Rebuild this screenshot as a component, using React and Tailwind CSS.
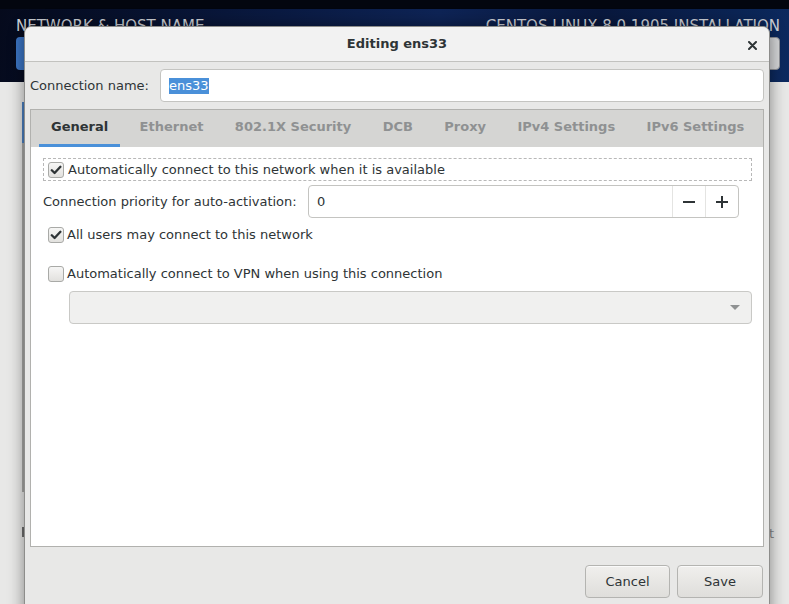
import React from 'react';

const tabs = ['General', 'Ethernet', '802.1X Security', 'DCB', 'Proxy', 'IPv4 Settings', 'IPv6 Settings'];

const Checkbox = ({ checked }) => (
  <span className="flex h-[16px] w-[16px] shrink-0 items-center justify-center rounded-[3px] border border-[#a9aaa7] bg-[linear-gradient(#f6f6f5,#e2e1de)]">
    {checked && (
      <svg width="12" height="12" viewBox="0 0 12 12">
        <path d="M1.8 6.2 L4.6 9 L10.4 2.8" fill="none" stroke="#2e3436" strokeWidth="2.3" strokeLinecap="round" strokeLinejoin="round" />
      </svg>
    )}
  </span>
);

const Button = ({ children, className }) => (
  <button className={`flex h-[33px] items-center justify-center rounded-[4px] border border-[#b4b4b1] bg-[linear-gradient(#f0efed,#dfdedb)] text-[13px] text-[#2e3436] shadow-[inset_0_1px_0_#fafafa] ${className}`}>
    {children}
  </button>
);

const App = () => {
  return (
    <div className="relative h-[604px] w-[789px] overflow-hidden bg-[#e8e8e7] font-['DejaVu_Sans',sans-serif] text-[#2e3436]">
      {/* installer hub in the background */}
      <div className="relative h-[82px] bg-[linear-gradient(100deg,#050a1c_0%,#0a1a42_35%,#0e2456_55%,#09183d_75%,#0c2a60_100%)]">
        <div className="h-[9px] bg-[#03060f]" />
        <div className="flex items-start justify-between pl-[16px] pr-[9px] pt-[8px] text-[15px] leading-[18px] text-[#cfd2d8]">
          <span>NETWORK &amp; HOST NAME</span>
          <span>CENTOS LINUX 8.0.1905 INSTALLATION</span>
        </div>
        <div className="absolute left-[16px] top-[37px] h-[33px] w-[70px] rounded-[4px] bg-[#3b74c3]" />
        <div className="absolute left-[720px] top-[37px] h-[33px] w-[60px] rounded-[4px] border border-[#8e9096] bg-[#d5d6d8]" />
      </div>
      <div className="absolute left-[22px] top-[102px] h-[390px] w-[2px] bg-[#a9a9a7]" />
      <div className="absolute left-[22px] top-[102px] h-[41px] w-[2px] bg-[#4a7fc0]" />
      <div className="absolute left-[22px] top-[527px] h-[10px] w-[2px] bg-[#6d6d6d]" />
      <span className="absolute left-[769px] top-[524px] text-[13px] text-[#8a8a8a]">t</span>

      {/* dialog */}
      <div className="absolute left-[24px] top-[26px] flex h-[600px] w-[746px] flex-col rounded-t-[7px] border border-[#8d8d8b] bg-[#e8e8e7] shadow-[0_0_16px_rgba(0,0,0,0.45)]">
        <div className="relative flex h-[35px] shrink-0 items-center justify-center rounded-t-[7px] border-b border-[#c2c2bf] bg-[#f2f2f2]">
          <span className="text-[13px] font-bold">Editing ens33</span>
          <svg className="absolute left-[723px] top-[14px]" width="9" height="9" viewBox="0 0 9 9">
            <path d="M1 1 L8 8 M8 1 L1 8" stroke="#2e3436" strokeWidth="2" strokeLinecap="round" />
          </svg>
        </div>

        <div className="flex flex-col px-[5px]">
          <div className="mt-[7px] flex h-[33px] items-center">
            <span className="text-[13px]">Connection name:</span>
            <div className="ml-auto flex h-[33px] w-[604px] items-center rounded-[4px] border border-[#c4c4c1] bg-white pl-[8px]">
              <span className="bg-[#4a90d9] text-[13px] leading-[16px] text-white">ens33</span>
            </div>
          </div>

          <div className="mt-[7px] flex h-[438px] flex-col border border-[#b1b1ae]">
            <div className="flex h-[37px] shrink-0 gap-[7.4px] bg-[#d5d5d3] pl-2">
              {tabs.map((tab, i) => (
                <div
                  key={tab}
                  className={`relative flex items-center px-3 pb-[4px] text-[13px] font-bold ${i === 0 ? 'text-[#2e3436]' : 'text-[#8f9192]'}`}
                >
                  {tab}
                  {i === 0 && <span className="absolute bottom-0 left-0 h-[3px] w-full bg-[#4a90d9]" />}
                </div>
              ))}
            </div>

            <div className="flex flex-1 flex-col bg-white pl-[12px] text-[13px]">
              <div className="mt-[11px] flex h-[23px] w-[709px] items-center gap-[4px] border border-dashed border-[#b8b8b8] pl-[4px]">
                <Checkbox checked />
                <span>Automatically connect to this network when it is available</span>
              </div>

              <div className="mt-[4px] flex h-[33px] items-center">
                <span className="w-[265px]">Connection priority for auto-activation:</span>
                <div className="flex h-[33px] w-[431px] rounded-[4px] border border-[#c4c4c1]">
                  <span className="flex flex-1 items-center pl-[8px]">0</span>
                  <span className="flex w-[33px] items-center justify-center border-l border-[#e4e4e2]">
                    <svg width="12" height="12" viewBox="0 0 12 12">
                      <path d="M0 6 H12" stroke="#2e3436" strokeWidth="2" />
                    </svg>
                  </span>
                  <span className="flex w-[33px] items-center justify-center border-l border-[#e4e4e2]">
                    <svg width="12" height="12" viewBox="0 0 12 12">
                      <path d="M0 6 H12 M6 0 V12" stroke="#2e3436" strokeWidth="2" />
                    </svg>
                  </span>
                </div>
              </div>

              <div className="ml-[5px] mt-[5px] flex h-[24px] items-center gap-[3px]">
                <Checkbox checked />
                <span>All users may connect to this network</span>
              </div>

              <div className="ml-[5px] mt-[15px] flex h-[24px] items-center gap-[3px]">
                <Checkbox />
                <span>Automatically connect to VPN when using this connection</span>
              </div>

              <div className="ml-[26px] mt-[5px] flex h-[33px] w-[683px] items-center justify-end rounded-[4px] border border-[#c9c9c6] bg-[#f0f0ef] pr-[11px]">
                <svg width="10" height="5" viewBox="0 0 10 5">
                  <path d="M0 0 H10 L5 5 Z" fill="#8f9192" />
                </svg>
              </div>
            </div>
          </div>

          <div className="mt-[18px] flex justify-end gap-[7px] pr-[1px]">
            <Button className="w-[85px]">Cancel</Button>
            <Button className="w-[86px]">Save</Button>
          </div>
        </div>
      </div>
    </div>
  );
};

export default App;
